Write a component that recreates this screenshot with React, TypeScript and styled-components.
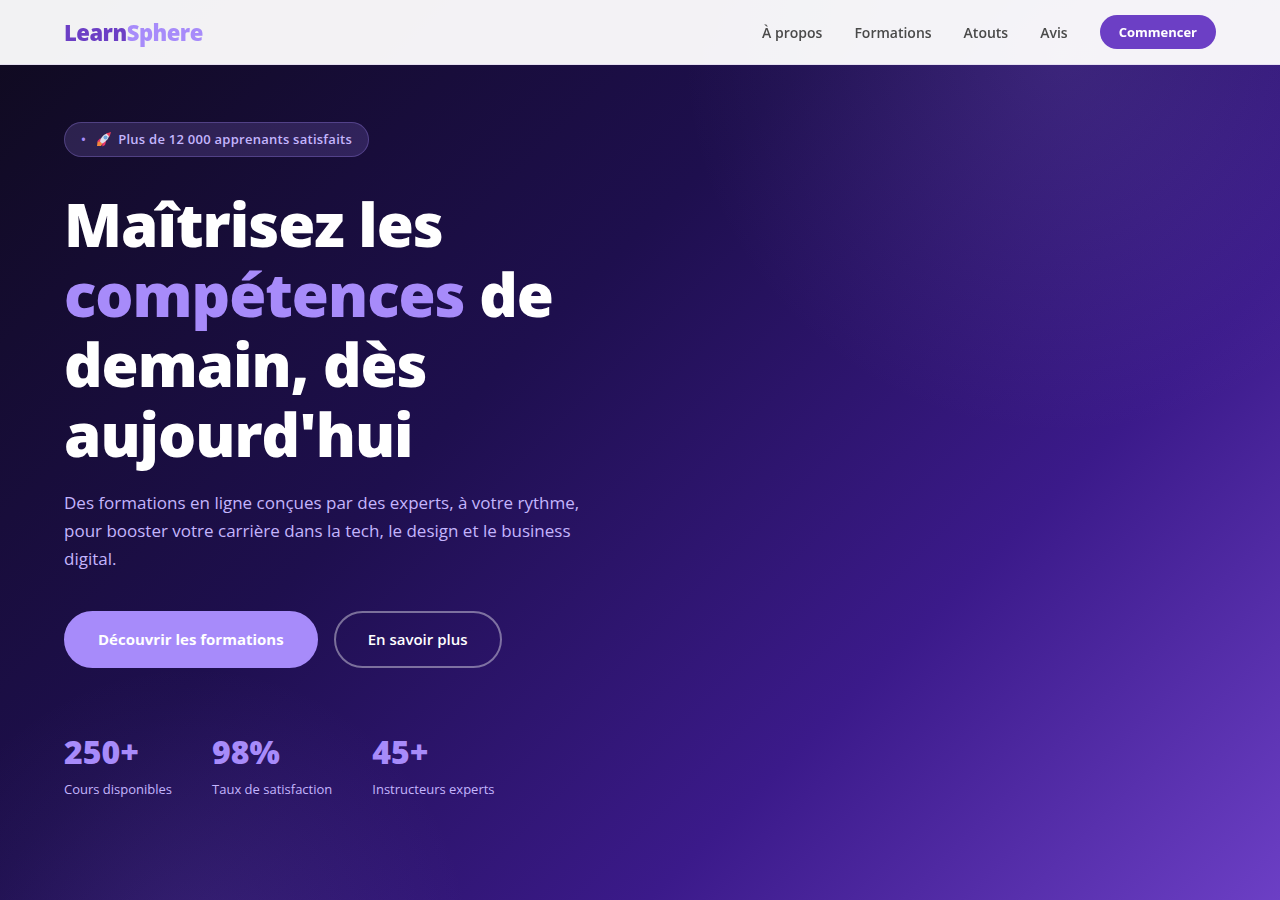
import React from "react";
import styled, { createGlobalStyle } from "styled-components";

const GlobalStyle = createGlobalStyle`
  *, *::before, *::after { box-sizing: border-box; }
  body {
    margin: 0;
    font-family: "Open Sans", "Noto Sans", sans-serif;
    color: #4a4a4a;
    background: #f8f7fc;
  }
  h1, p, ul, dl, dd { margin: 0; padding: 0; }
  a { text-decoration: none; }
`;

const Header = styled.header`
  position: fixed;
  inset: 0 0 auto;
  z-index: 10;
  display: flex;
  align-items: center;
  justify-content: space-between;
  height: 65px;
  padding: 0 5%;
  background: rgba(255, 255, 255, 0.95);
  border-bottom: 1px solid rgba(108, 63, 197, 0.1);
`;

const Logo = styled.a`
  font-size: 22px;
  line-height: 30px;
  font-weight: 800;
  letter-spacing: -0.5px;
  color: #6c3fc5;
`;

const LogoAccent = styled.span`
  color: #a78bfa;
`;

const NavList = styled.ul`
  display: flex;
  align-items: center;
  gap: 32px;
  list-style: none;
`;

const NavLink = styled.a`
  font-size: 14px;
  line-height: 20px;
  font-weight: 600;
  color: #4a4a4a;
`;

const NavButton = styled.a`
  display: block;
  padding: 7px 19px;
  border-radius: 50px;
  background: #6c3fc5;
  color: #fff;
  font-size: 13px;
  line-height: 20px;
  font-weight: 700;
`;

const Hero = styled.section`
  display: flex;
  align-items: center;
  min-height: 100vh;
  padding: 120px 5% 100px;
  background:
    radial-gradient(circle 380px at 83% 6%, rgba(167, 139, 250, 0.15), transparent),
    radial-gradient(circle 280px at 15% 105%, rgba(167, 139, 250, 0.1), transparent),
    linear-gradient(135deg, #0f0a1e 0%, #1e0f4e 40%, #3b1a8a 71%, #6c3fc5 100%);
`;

const HeroContent = styled.div`
  max-width: 520px;
`;

const Badge = styled.p`
  display: inline-flex;
  align-items: center;
  gap: 10px;
  padding: 7px 16px;
  margin-bottom: 32px;
  border: 1px solid rgba(167, 139, 250, 0.3);
  border-radius: 50px;
  background: rgba(167, 139, 250, 0.18);
  color: #c4b5fd;
  font-size: 13px;
  line-height: 19px;
  font-weight: 600;
  letter-spacing: 0.02em;
`;

const BadgeLabel = styled.span`
  display: flex;
  align-items: center;
  gap: 6px;
`;

const BadgeDot = styled.span`
  color: #a78bfa;
`;

const Title = styled.h1`
  margin-bottom: 20px;
  color: #fff;
  font-size: 60px;
  line-height: 70px;
  font-weight: 800;
  letter-spacing: -1px;
`;

const Accent = styled.span`
  color: #a78bfa;
`;

const Lead = styled.p`
  margin-bottom: 38px;
  color: #c4b5fd;
  font-size: 17px;
  line-height: 28px;
`;

const Actions = styled.div`
  display: flex;
  flex-wrap: wrap;
  gap: 16px;
  margin-bottom: 64px;
`;

const ActionLink = styled.a<{ $outlined?: boolean }>`
  padding: 16px 32px;
  border: 2px solid ${(p) => (p.$outlined ? "rgba(255, 255, 255, 0.4)" : "#a78bfa")};
  border-radius: 50px;
  background: ${(p) => (p.$outlined ? "transparent" : "#a78bfa")};
  color: #fff;
  font-size: 15px;
  line-height: 21px;
  font-weight: ${(p) => (p.$outlined ? 600 : 700)};
`;

const Stats = styled.dl`
  display: flex;
  flex-wrap: wrap;
  gap: 40px;
`;

const Stat = styled.div`
  display: flex;
  flex-direction: column-reverse;
`;

const StatLabel = styled.dt`
  color: #c4b5fd;
  font-size: 13px;
  line-height: 20px;
`;

const StatValue = styled.dd`
  margin-bottom: 7px;
  color: #a78bfa;
  font-size: 32px;
  line-height: 40px;
  font-weight: 800;
`;

const RocketIcon = () => (
  <svg width="16" height="16" viewBox="0 0 16 16" aria-hidden="true">
    <path d="M1 10.500l3-3 3 1-2 3.500z" fill="#e8386a" />
    <path d="M6 12l2.500-3 1.500 1.500-1 3.500-2.500 1.500z" fill="#e8386a" />
    <path d="M1 15l0.500-4 2.500-0.500 2.500 2-1.500 2.500z" fill="#f5873c" />
    <path d="M4 10.500C5 6 8 2.500 13.500 2c0 5-3 8.500-7.500 10.500z" fill="#dfe0ea" />
    <path d="M10 2.500L15 1l-1.500 5c-1-1.500-2-2.500-3.500-3.500z" fill="#ee3e5c" />
    <circle cx="9.500" cy="6.500" r="2" fill="#6fa4dc" />
  </svg>
);

const links = [
  { label: "À propos", href: "#a-propos" },
  { label: "Formations", href: "#formations" },
  { label: "Atouts", href: "#atouts" },
  { label: "Avis", href: "#avis" },
];

const stats = [
  { value: "250+", label: "Cours disponibles" },
  { value: "98%", label: "Taux de satisfaction" },
  { value: "45+", label: "Instructeurs experts" },
];

export default function App() {
  return (
    <>
      <GlobalStyle />
      <Header>
        <Logo href="#">
          Learn<LogoAccent>Sphere</LogoAccent>
        </Logo>
        <nav>
          <NavList>
            {links.map((l) => (
              <li key={l.href}>
                <NavLink href={l.href}>{l.label}</NavLink>
              </li>
            ))}
            <li>
              <NavButton href="#commencer">Commencer</NavButton>
            </li>
          </NavList>
        </nav>
      </Header>
      <main>
        <Hero>
          <HeroContent>
            <Badge>
              <BadgeDot>•</BadgeDot>
              <BadgeLabel>
                <RocketIcon />
                Plus de 12 000 apprenants satisfaits
              </BadgeLabel>
            </Badge>
            <Title>
              Maîtrisez les <Accent>compétences</Accent> de demain, dès aujourd'hui
            </Title>
            <Lead>
              Des formations en ligne conçues par des experts, à votre rythme, pour booster votre
              carrière dans la tech, le design et le business digital.
            </Lead>
            <Actions>
              <ActionLink href="#formations">Découvrir les formations</ActionLink>
              <ActionLink href="#a-propos" $outlined>
                En savoir plus
              </ActionLink>
            </Actions>
            <Stats>
              {stats.map((s) => (
                <Stat key={s.label}>
                  <StatLabel>{s.label}</StatLabel>
                  <StatValue>{s.value}</StatValue>
                </Stat>
              ))}
            </Stats>
          </HeroContent>
        </Hero>
      </main>
    </>
  );
}
